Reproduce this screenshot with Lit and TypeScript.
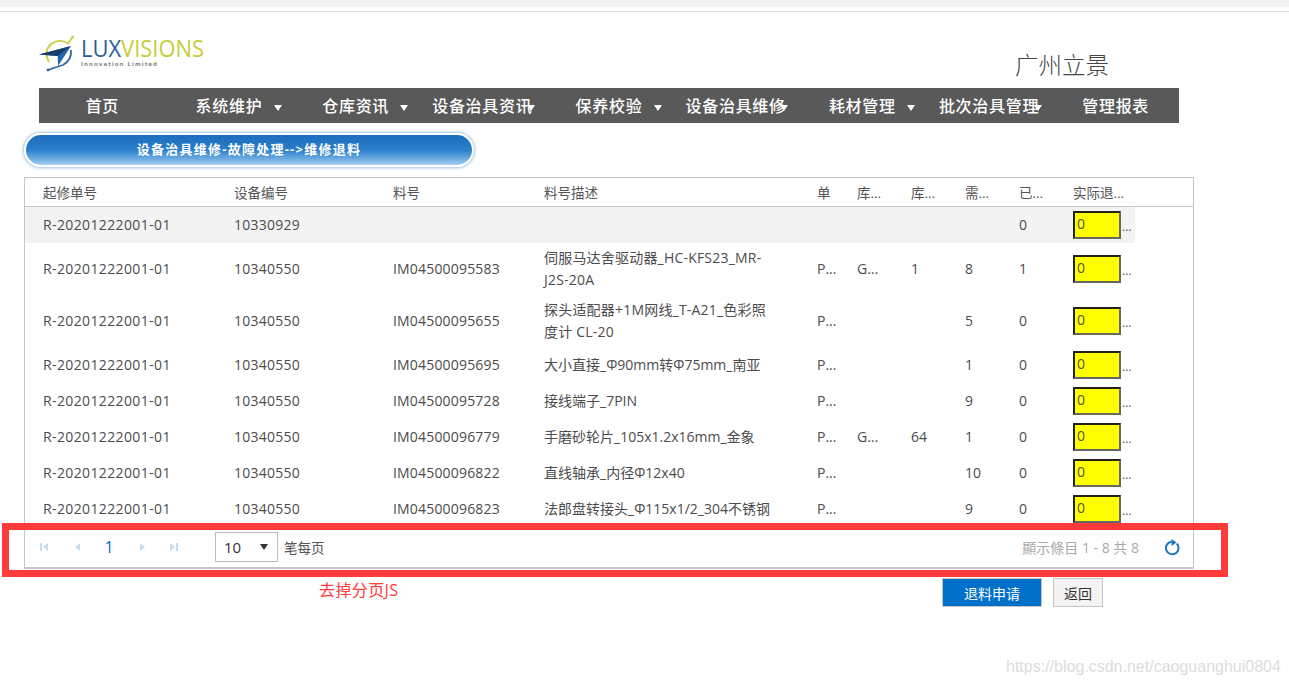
import { LitElement, html, svg, css } from "lit";
import { customElement } from "lit/decorators.js";

const SN = "R-20201222001-01";
const rows = [
  { dev: "10330929", no: "", desc: "", u: "", w: "", s: "", need: "", done: "0", alt: true },
  { dev: "10340550", no: "IM04500095583", desc: "伺服马达舍驱动器_HC-KFS23_MR-\nJ2S-20A", u: "P...", w: "G...", s: "1", need: "8", done: "1", wide: true },
  { dev: "10340550", no: "IM04500095655", desc: "探头适配器+1M网线_T-A21_色彩照\n度计 CL-20", u: "P...", w: "", s: "", need: "5", done: "0", wide: true },
  { dev: "10340550", no: "IM04500095695", desc: "大小直接_Φ90mm转Φ75mm_南亚", u: "P...", w: "", s: "", need: "1", done: "0" },
  { dev: "10340550", no: "IM04500095728", desc: "接线端子_7PIN", u: "P...", w: "", s: "", need: "9", done: "0" },
  { dev: "10340550", no: "IM04500096779", desc: "手磨砂轮片_105x1.2x16mm_金象", u: "P...", w: "G...", s: "64", need: "1", done: "0" },
  { dev: "10340550", no: "IM04500096822", desc: "直线轴承_内径Φ12x40", u: "P...", w: "", s: "", need: "10", done: "0" },
  { dev: "10340550", no: "IM04500096823", desc: "法郎盘转接头_Φ115x1/2_304不锈钢", u: "P...", w: "", s: "", need: "9", done: "0" },
];
const menu = [
  ["首页", false], ["系统维护", true], ["仓库资讯", true], ["设备治具资讯", true], ["保养校验", true],
  ["设备治具维修", true], ["耗材管理", true], ["批次治具管理", true], ["管理报表", false],
] as [string, boolean][];
const heads = ["起修单号", "设备编号", "料号", "料号描述", "单", "库...", "库...", "需...", "已...", "实际退..."];
const widths = [191, 159, 151, 273, 40, 54, 54, 54, 54, 80];

@customElement("app-root")
export class AppRoot extends LitElement {
  static styles = css`
    :host { display: block; position: relative; width: 1289px; height: 685px; overflow: hidden; background: #fff;
      font-family: "Open Sans", "Noto Sans CJK SC", sans-serif; font-size: 14px; color: #4c4c4c; }
    .topbar { height: 7px; background: #f1f2f4; }
    .topline { height: 1px; margin-top: 4px; background: #dedede; }
    .head { height: 76px; display: flex; justify-content: space-between; padding: 0 180px 0 39px; box-sizing: border-box; }
    .logo { display: block; margin-top: 22px; }
    .site { font-size: 23.5px; font-weight: 300; color: #444; line-height: 32px; margin-top: 37px; }
    nav { display: grid; grid-template-columns: repeat(9, 1fr); width: 1140px; height: 35px; margin-left: 39px; background: #595959; }
    .item { position: relative; display: flex; align-items: center; justify-content: center; box-sizing: border-box; padding-bottom: 2px; color: #fff; font-size: 16px; letter-spacing: .7px; font-weight: 500; white-space: nowrap; }
    .caret { position: absolute; left: 108px; top: 17px; width: 0; height: 0; border: 4px solid transparent; border-top: 6px solid #fff; border-bottom: 0; }
    .title { box-sizing: border-box; width: 450px; height: 34px; margin: 10px 0 0 24px; padding-bottom: 3px; border: 2px solid #fff; border-radius: 17px;
      background: linear-gradient(#1c6cbc 0%, #2a7fcb 50%, #6aa9e0 78%, #a9d0f2 100%);
      box-shadow: 0 0 3px 1px #9cc0e2; color: #fff; font-weight: 700; font-size: 13px; letter-spacing: 1.25px; display: flex; align-items: center; justify-content: center; }
    .grid { width: 1170px; height: 392px; margin: 10px 0 0 24px; box-sizing: border-box; border: 1px solid #c5c5c5; border-bottom-width: 2px; display: flex; flex-direction: column; overflow: hidden; }
    .body { height: 320px; flex: none; overflow: hidden; }
    table { border-collapse: collapse; table-layout: fixed; width: 1110px; }
    th { height: 28px; padding: 0 0 0 18px; font-weight: 400; text-align: left; font-size: 13.5px; color: #555; white-space: nowrap; overflow: hidden; box-sizing: border-box; }
    .hr { height: 1px; background: #c8c8c8; width: 1168px; flex: none; }
    td { padding: 4px 4px 4px 18px; line-height: 22px; white-space: pre-line; overflow: hidden; vertical-align: middle; }
    td.sn { letter-spacing: .38px; }
    td.dev { letter-spacing: .25px; }
    td.no { letter-spacing: .18px; }
    tr.wide td.desc { letter-spacing: .2px; }
    tr.alt td { background: #f3f3f3; }
    .cell { display: flex; align-items: center; }
    .inp { box-sizing: border-box; width: 48px; height: 28px; padding: 0 2px 3px; margin: 0; background: #ff0; border: 2px solid; border-color: #222 #666 #666 #222; font: inherit; color: #555; flex: none; }
    .dots { margin-left: 1px; padding-top: 4px; color: #555; font-size: 12px; }
    .pager { flex: 1; display: flex; align-items: center; padding-left: 15px; padding-right: 12px; }
    .pg { display: block; flex: none; }
    .gap1 { width: 25px; flex: none; }
    .gap2 { width: 24px; flex: none; }
    .num { width: 24px; margin: 0 17px 0 16px; text-align: center; color: #0070c8; font-size: 16px; }
    .sel { box-sizing: border-box; width: 63px; height: 30px; margin: 0 6px 0 37px; border: 1px solid #bbb; display: flex; align-items: center; justify-content: space-between; padding: 0 9px 0 8px; color: #333; font-size: 15px; }
    .sel i { width: 0; height: 0; border: 4px solid transparent; border-top: 6px solid #333; border-bottom: 0; }
    .per { font-size: 13.5px; color: #555; }
    .info { margin-left: auto; color: #aaa; font-size: 14px; }
    .refresh { display: block; margin-left: 26px; }
    .btns { display: flex; justify-content: flex-end; gap: 11px; width: 1103px; margin-top: 9px; }
    button { box-sizing: border-box; height: 29px; border: 1px solid #c5c5c5; font: inherit; font-size: 14px; padding: 0; }
    .pri { width: 100px; background: #0070c8; color: #fff; }
    .sec { width: 50px; background: #f3f3f3; color: #333; }
    .mark { position: absolute; left: 2px; top: 523px; width: 1226px; height: 54px; box-sizing: border-box; border: 7px solid #ff3a3a; pointer-events: none; }
    .note { position: absolute; left: 319px; top: 579px; color: #ff3a3a; font-size: 16px; letter-spacing: .4px; line-height: 22px; }
    .wm { position: absolute; left: 1006px; top: 656px; color: #dcdcdc; font-family: "Liberation Sans", sans-serif; font-size: 16px; line-height: 22px; white-space: nowrap; }
  `;

  private pgIcon(kind: string) {
    const c = "#c6ddf1";
    const shapes: Record<string, unknown> = {
      first: svg`<rect x="0" y="1" width="2" height="8" fill=${c}></rect><path d="M8 1v8L3 5z" fill=${c}></path>`,
      prev: svg`<path d="M7 1v8L2 5z" fill=${c}></path>`,
      next: svg`<path d="M2 1v8l5-4z" fill=${c}></path>`,
      last: svg`<rect x="6" y="1" width="2" height="8" fill=${c}></rect><path d="M0 1v8l5-4z" fill=${c}></path>`,
    };
    return html`<svg class="pg" width="8" height="10" viewBox="0 0 8 10">${shapes[kind]}</svg>`;
  }

  render() {
    return html`
      <div class="topbar"></div>
      <div class="topline"></div>
      <header class="head">
        <svg class="logo" width="170" height="38" viewBox="39 34 170 38">
          <path d="M49 62Q43 52 51 44Q60 38 68 43.5L72.7 37" fill="none" stroke="#c9d040" stroke-width="1.8"></path>
          <circle cx="72.7" cy="37" r="1.3" fill="#c9d040"></circle>
          <path d="M39 54.6L71 46L58 66L57.7 56z" fill="#2467a8"></path>
          <path d="M39 54.6L57.7 56L71 46z" fill="#173f6e"></path>
          <path d="M71 50Q72 60 63 65Q56 67 48.5 70" fill="none" stroke="#2f6aa6" stroke-width="1.8"></path>
          <circle cx="48" cy="70" r="1.4" fill="#2f6aa6"></circle>
          <text x="81" y="57" font-family="Open Sans" font-size="24" font-weight="400" textLength="123" lengthAdjust="spacingAndGlyphs"><tspan fill="#2a6096">LUX</tspan><tspan fill="#c6cd3c">VISIONS</tspan></text>
          <text x="81" y="66" font-family="DejaVu Sans" font-size="5.5" font-weight="700" fill="#8a8a8a" textLength="76">Innovation Limited</text>
        </svg>
        <div class="site">广州立景</div>
      </header>
      <nav>
        ${menu.map(([t, c]) => html`<div class="item">${t}${c ? html`<span class="caret"></span>` : ""}</div>`)}
      </nav>
      <div class="title">设备治具维修-故障处理-->维修退料</div>
      <section class="grid">
        <table>
          <colgroup>${widths.map((w) => html`<col style="width:${w}px" />`)}</colgroup>
          <tr>${heads.map((h) => html`<th>${h}</th>`)}</tr>
        </table>
        <div class="hr"></div>
        <div class="body">
          <table>
            <colgroup>${widths.map((w) => html`<col style="width:${w}px" />`)}</colgroup>
            ${rows.map((r) => html`<tr class="${r.alt ? "alt" : ""} ${r.wide ? "wide" : ""}">
              <td class="sn">${SN}</td><td class="dev">${r.dev}</td><td class="no">${r.no}</td><td class="desc">${r.desc}</td><td>${r.u}</td><td>${r.w}</td><td>${r.s}</td><td>${r.need}</td><td>${r.done}</td>
              <td><div class="cell"><input class="inp" value="0" /><span class="dots">...</span></div></td>
            </tr>`)}
          </table>
        </div>
        <div class="pager">
          ${this.pgIcon("first")}<span class="gap1"></span>${this.pgIcon("prev")}
          <span class="num">1</span>
          ${this.pgIcon("next")}<span class="gap2"></span>${this.pgIcon("last")}
          <div class="sel">10<i></i></div>
          <span class="per">笔每页</span>
          <span class="info">顯示條目 1 - 8 共 8</span>
          <svg class="refresh" width="16" height="18" viewBox="0 0 16 18">
            <path d="M11.7 5.5A6.3 6.3 0 1 1 6.5 3.7" fill="none" stroke="#1a75c4" stroke-width="2"></path>
            <path d="M6.5 1v7l5-3.5z" fill="#1a75c4"></path>
          </svg>
        </div>
      </section>
      <div class="btns"><button class="pri">退料申请</button><button class="sec">返回</button></div>
      <div class="mark"></div>
      <div class="note">去掉分页JS</div>
      <div class="wm">https://blog.csdn.net/caoguanghui0804</div>
    `;
  }
}
